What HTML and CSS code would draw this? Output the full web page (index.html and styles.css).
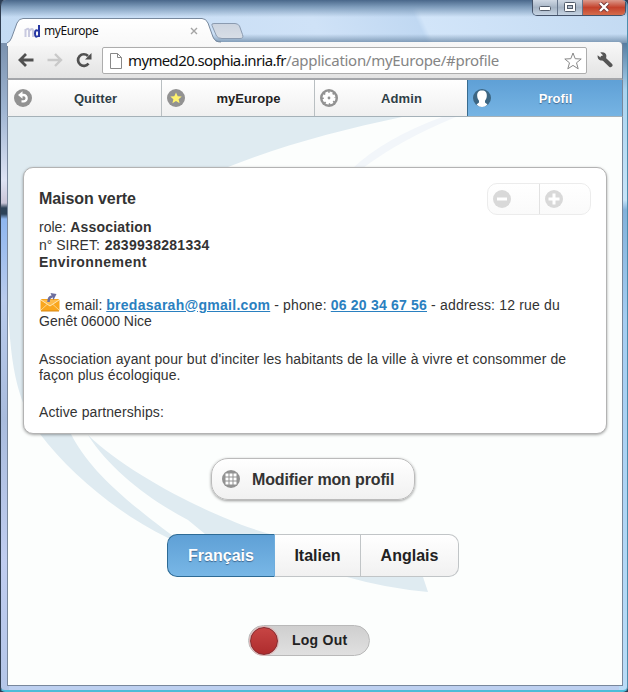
FILE: index.html
```html
<!DOCTYPE html>
<html lang="fr">
<head>
<meta charset="utf-8">
<title>myEurope</title>
<link rel="stylesheet" href="styles.css">
</head>
<body>
<div class="window">
  <header class="titlebar">
    <svg class="tabshape" width="260" height="28" viewBox="0 0 260 28">
      <defs>
        <linearGradient id="tabfill" x1="0" y1="0" x2="0" y2="1"><stop offset="0" stop-color="#fff"/><stop offset="1" stop-color="#f8f8f8"/></linearGradient>
        <linearGradient id="newfill" x1="0" y1="0" x2="0" y2="1"><stop offset="0" stop-color="#ccd4df"/><stop offset="1" stop-color="#d8dee6"/></linearGradient>
      </defs>
      <path d="M205 7.500Q204 5.500 207 5.500H228Q231 5.500 232.500 8L235.500 16.500Q237 20.500 233 20.500H215Q211 20.500 209.500 18Z" fill="url(#newfill)" stroke="#8b9bb0"/>
      <path d="M0 25Q3 24 4.500 20L10 5Q12 0.500 16 0.500H195Q199 0.500 201 5L206 19Q208 24.500 213 25V28H0Z" fill="url(#tabfill)"/>
      <path d="M0 25Q3 24 4.500 20L10 5Q12 0.500 16 0.500H195Q199 0.500 201 5L206 19Q208 24 214 24" fill="none" stroke="#77889d"/>
    </svg>
    <div class="tab">
      <svg class="favicon" width="17" height="16" viewBox="0 0 17 16" fill="none">
        <path d="M1.500 14V6M1.500 7Q5 4 5 8V14M5 8Q9 4 9 8V14" stroke="#c9cae0" stroke-width="2"/>
        <path d="M15 2V14M14 8Q11 6 11 10.500T14 13" stroke="#2536a2" stroke-width="2"/>
      </svg>
      <span class="tabtitle">myEurope</span>
      <svg class="tabclose" width="8" height="8" viewBox="0 0 8 8"><path d="M1 1L7 7M7 1L1 7" stroke="#a4a4a4" stroke-width="1.400"/></svg>
    </div>
    <div class="controls">
      <span class="ctl min"><svg width="13" height="6" viewBox="0 0 13 6"><rect x=".5" y=".5" width="11" height="4" rx="1" fill="#fff" stroke="#525c6b"/></svg></span>
      <span class="ctl max"><svg width="12" height="10" viewBox="0 0 12 10"><rect x=".5" y=".5" width="11" height="9" rx="1" fill="#fff" stroke="#525c6b"/><rect x="3.500" y="3.500" width="5" height="3" fill="#b5bfcd" stroke="#525c6b"/></svg></span>
      <span class="ctl close"><svg width="12" height="10" viewBox="0 0 12 10"><path d="M2 1L10 9M10 1L2 9" stroke="#6f3434" stroke-width="4"/><path d="M2 1L10 9M10 1L2 9" stroke="#fff" stroke-width="2.400"/></svg></span>
    </div>
  </header>

  <div class="toolbar">
    <svg class="back" width="16" height="14" viewBox="0 0 16 14" fill="none" stroke="#505050" stroke-width="2.800"><path d="M2 7H15.500M8 1L2 7L8 13"/></svg>
    <svg class="forward" width="16" height="14" viewBox="0 0 16 14" fill="none" stroke="#c9c9c9" stroke-width="2.400"><path d="M.5 7H14M8 1L14 7L8 13"/></svg>
    <svg class="reload" width="16" height="16" viewBox="0 0 16 16"><path d="M12.500 11.500A5.800 5.800 0 1 1 12 4" fill="none" stroke="#505050" stroke-width="2.700"/><path d="M15.500 1V7.500H9Z" fill="#505050"/></svg>
    <div class="address">
      <svg class="page" width="12" height="16" viewBox="0 0 12 16"><path d="M.5 .5H7.500L11.500 4.500V15.500H.5ZM7.500 .5V4.500H11.500" fill="#fff" stroke="#888"/></svg>
      <span class="url"><span class="host">mymed20.sophia.inria.fr</span><span class="path">/application/myEurope/#profile</span></span>
      <svg class="bookmark" width="18" height="18" viewBox="0 0 18 18"><path d="M9 1L11.200 6.700L17.200 7L12.500 10.800L14.200 16.800L9 13.400L3.800 16.800L5.500 10.800L.8 7L6.800 6.700Z" fill="#fff" stroke="#888" stroke-linejoin="round"/></svg>
    </div>
    <svg class="wrench" width="16" height="16" viewBox="0 0 16 16"><path d="M5.500 5.500L13.500 13.200" stroke="#555" stroke-width="4" stroke-linecap="round"/><path d="M3.200 .5L6 3.200L5.600 5L3.600 5.600L.6 3.200Q.3 7 3 8.300Q5 9 7 8L9.300 5.500Q9.800 1.500 6.800 .6Q5 0 3.200 .5Z" fill="#555"/></svg>
  </div>

  <nav class="nav">
    <a class="navitem">
      <svg class="icon" width="18" height="18" viewBox="0 0 18 18"><circle cx="9" cy="9" r="9" fill="#929292"/><path d="M8 6H9.500A3.100 3.100 0 0 1 9.500 12.400H7.500" fill="none" stroke="#fff" stroke-width="2.300"/><path d="M8.500 2.300V9.700L4 6Z" fill="#fff"/></svg>
      <span>Quitter</span></a>
    <a class="navitem dark">
      <svg class="icon" width="18" height="18" viewBox="0 0 18 18"><circle cx="9" cy="9" r="9" fill="#929292"/><path d="M9 3.500L10.700 7.200L14.700 7.500L11.600 10.200L12.600 14.200L9 12L5.400 14.200L6.400 10.200L3.300 7.500L7.300 7.200Z" fill="#fff36d"/></svg>
      <span>myEurope</span></a>
    <a class="navitem">
      <svg class="icon" width="18" height="18" viewBox="0 0 18 18"><circle cx="9" cy="9" r="9" fill="#929292"/><circle cx="9" cy="9" r="5.200" fill="#fff"/><circle cx="9" cy="9" r="5.300" fill="none" stroke="#fff" stroke-width="2.400" stroke-dasharray="2.800 1.362"/><circle cx="9" cy="9" r="1.400" fill="#929292"/></svg>
      <span>Admin</span></a>
    <a class="navitem active">
      <svg class="icon" width="18" height="18" viewBox="0 0 18 18"><circle cx="9" cy="9" r="9" fill="#3c6683"/><path d="M9 1.500C12.500 1.500 14 3.500 13.800 7C13.700 9.500 12.900 10.500 12 11.800V13.500L14.500 15.500Q12 18 9 18T3.500 15.500L6 13.500V11.800C5.100 10.500 4.300 9.500 4.200 7C4 3.500 5.500 1.500 9 1.500Z" fill="#fff"/></svg>
      <span>Profil</span></a>
  </nav>

  <main class="content">
    <svg class="swoosh" width="614" height="569" viewBox="8 117 614 569">
      <path d="M8 117H402C340 130 280 146 228 167C90 222 20 320 71 434C88 467 117 495 180 541L168 538C120 515 70 474 40 434C20 405 10 375 8 300Z" fill="#dfebf1"/>
      <path d="M88 435C120 466 180 500 230 520Q245 527 270 534Q340 560 423 577L428 592Q385 588 347 577L205 534L188 520C150 500 110 470 88 435Z" fill="#dfebf1"/>
      <path d="M442 117Q385 138 353 168L363 168Q400 140 456 117Z" fill="#f2f6fa"/>
    </svg>

    <section class="card">
      <div class="stepper">
        <span class="step"><svg width="18" height="18" viewBox="0 0 18 18"><circle cx="9" cy="9" r="9" fill="#d9d9d9"/><path d="M4 9H14" stroke="#fff" stroke-width="3"/></svg></span>
        <span class="step"><svg width="18" height="18" viewBox="0 0 18 18"><circle cx="9" cy="9" r="9" fill="#d9d9d9"/><path d="M3.500 9H14.500M9 3.500V14.500" stroke="#fff" stroke-width="3"/></svg></span>
      </div>
      <h3>Maison verte</h3>
      <div class="facts">
        <div>role: <b class="kind">Association</b></div>
        <div>n° SIRET: <b class="siret">2839938281334</b></div>
        <div><b class="theme">Environnement</b></div>
      </div>
      <p class="contact"><svg class="mail" width="22" height="20" viewBox="0 0 22 20"><rect x="1.500" y="7" width="19" height="12" rx="1.500" fill="#f9a61d"/><path d="M2 8L11 14L20 8" fill="#fdbb4a" stroke="#ffe7b5"/><path d="M2 18L8 12.500M20 18L14 12.500" stroke="#ffd587"/><path d="M2 19H20" stroke="#d98713"/><path d="M9.500 10Q9.500 5 13 4.500" fill="none" stroke="#6d6e9d" stroke-width="2.600"/><path d="M11.500 1L17.500 2L14.500 8Z" fill="#6d6e9d"/></svg>email: <a class="mailto">bredasarah@gmail.com</a><span class="phone"> - phone: </span><a class="tel">06 20 34 67 56</a><span class="street"> - address: 12 rue du</span><br>Genêt 06000 Nice</p>
      <p class="about">Association ayant pour but d'inciter les habitants de la ville à vivre et consommer de<br>façon plus écologique.</p>
      <p class="partners">Active partnerships:</p>
    </section>

    <a class="edit">
      <svg width="18" height="18" viewBox="0 0 18 18"><circle cx="9" cy="9" r="9" fill="#929292"/><path d="M4 4H7V7H4ZM8 4H11V7H8ZM12 4H15V7H12ZM4 8H7V11H4ZM8 8H11V11H8ZM12 8H15V11H12ZM4 12H7V15H4ZM8 12H11V15H8ZM12 12H15V15H12Z" transform="translate(-.5 -.5)" fill="#fff"/></svg>
      <span>Modifier mon profil</span>
    </a>

    <div class="langs">
      <a class="lang on"><span>Français</span></a>
      <a class="lang"><span>Italien</span></a>
      <a class="lang"><span>Anglais</span></a>
    </div>

    <div class="logout"><i class="knob"></i><span>Log Out</span></div>
  </main>
</div>
</body>
</html>
```
FILE: styles.css
```css
* { box-sizing: border-box; }
body { margin: 0; background: #2c3f57; }
.window {
  width: 628px; height: 692px; padding: 0 4px 4px 6px; overflow: hidden;
  border: 1px solid #4d8fae; border-width: 0 1px 2px 1px;
  border-bottom-color: #4cbcd8; border-left-color: #2f3d50;
  border-radius: 6px 6px 5px 5px;
  background:
    linear-gradient(#49678a, #7f9dbc 7px, rgba(190,215,240,0) 17px) 0 0 / 100% 20px no-repeat,
    linear-gradient(0deg, rgba(95,125,155,.75), rgba(95,125,155,0)) 205px 34px / 430px 9px no-repeat,
    linear-gradient(65deg, #c4dbf3 0%, #cfe2f7 50%, #c0d8f2 66%, #d2e5f9 67%, #c3daf2 100%) 0 0 / 100% 43px no-repeat,
    linear-gradient(#7990ad 40px, #9fb5d2 110px, #dde3f4 180px, #c9c5d8 203px, #2c4258 208px, #2c4258 214px, #8eb6ef 219px, #b9cbec 300px, #a9bcdd 420px, #c0cdf0 560px, #b4c6e8 692px) 0 0 / 8px 100% no-repeat,
    linear-gradient(#52779c 40px, #a9d3ef 90px, #c7e4f8 200px, #82b1da 210px, #a5cdf1 320px, #b9dcf7 692px) 100% 0 / 8px 100% no-repeat,
    #bdd0f0;
  font-family: "Liberation Sans", Arial, sans-serif; color: #333;
  display: flex; flex-direction: column;
}
.titlebar { height: 42px; flex: none; position: relative; display: flex; justify-content: space-between; }
.tabshape { position: absolute; left: 0; top: 18px; }
.tab { position: relative; display: flex; align-items: center; width: 174px; height: 26px; margin: 18px 0 0 17px; }
.favicon { flex: none; }
.tabtitle { font: 12px/16px "Noto Sans", sans-serif; color: #111; margin-left: 3px; letter-spacing: -.4px; flex: 1; }
.controls { display: flex; height: 16px; margin-right: -3px; border: 1px solid #44536a; border-top: 0; border-radius: 0 0 5px 5px; overflow: hidden; }
.ctl { display: flex; align-items: center; justify-content: center; width: 25px; padding-bottom: 1px; background: linear-gradient(#cfd8e4, #a5b3c4 50%, #c6d4e3); border-right: 1px solid #65748a; }
.min { padding-top: 4px; }
.close { width: 42px; border: 0; background: linear-gradient(#dc9a8c, #c4422c 50%, #d56c4c); }

.toolbar { height: 38px; flex: none; display: flex; align-items: center; border: 1px solid #75859a; border-bottom: 2px solid #a4a6aa; border-radius: 0 4px 0 0; border-top-width: 0; background: linear-gradient(#f8f8f8, #e3e3e3); padding: 0 8px 0 10px; }
.forward { margin-left: 13px; }
.reload { margin-left: 13px; }
.address { height: 27px; width: 485px; margin: 1px 0 0 10px; border: 1px solid #adadad; border-radius: 2px; background: #fff; display: flex; align-items: center; padding: 0 4px 0 7px; }
.page, .bookmark { flex: none; }
.url { font: 15px/24px "Noto Sans", sans-serif; color: #111; margin-left: 6px; white-space: nowrap; flex: 1; padding-bottom: 1px; }
.host { letter-spacing: -.64px; }
.path { color: #858585; letter-spacing: -.29px; }
.wrench { margin-left: 10px; }

.nav { height: 37px; flex: none; display: grid; grid-template-columns: 153px 153px 153px 1fr; border-left: 1px solid #78879c; border-right: 1px solid #78879c; border-bottom: 1px solid #a5b1b8; background: #f5f5f5; padding-left: 1px; }
.navitem { display: flex; align-items: center; padding: 0 2px 0 5px; font-size: 13px; letter-spacing: .08px; font-weight: bold; color: #2f3e46; border-right: 1px solid #b9bfc2; background: linear-gradient(#fff, #f0f0f0); text-shadow: 0 1px 0 #fff; }
.navitem span { flex: 1; text-align: center; }
.navitem .icon { flex: none; }
.navitem.dark { color: #222; }
.navitem.active { color: #fff; border: 0; border-left: 1px solid #396c8f; margin-left: -1px; background: linear-gradient(#5fa0d6, #76b4e3); text-shadow: 0 1px 1px #3e6790; }

.content { flex: 1; position: relative; border: 1px solid #78879c; border-top: 0; background: #fcfefd; display: flex; flex-direction: column; align-items: center; min-height: 0; }
.swoosh { position: absolute; left: 0; top: 0; }
.card { position: relative; flex: none; width: 584px; height: 267px; margin-top: 50px; padding: 22px 15px 0; background: #fff; border: 1px solid #b3b3b3; border-radius: 10px; box-shadow: 0 1px 3px rgba(0,0,0,.35); }
.card h3 { margin: 0; font-size: 16px; line-height: 18px; letter-spacing: -.08px; }
.facts { margin-top: 11px; font-size: 14px; line-height: 17.500px; }
.kind { letter-spacing: .22px; }
.siret { letter-spacing: .28px; margin-left: 1px; }
.theme { letter-spacing: .46px; }
.card p { margin: 0; font-size: 14px; line-height: 16px; white-space: nowrap; }
.card .contact { margin-top: 25px; }
.card .about { margin-top: 22px; letter-spacing: .1px; }
.card .partners { margin-top: 21px; letter-spacing: .1px; }
.mail { margin: -6px 4px -1px 0; vertical-align: -1px; height: 20px; }
.contact a { color: #2a80c0; font-weight: bold; text-decoration: underline; }
.mailto { letter-spacing: .28px; }
.phone { letter-spacing: .14px; }
.tel { letter-spacing: .2px; }
.street { letter-spacing: .18px; }
.stepper { position: absolute; right: 15px; top: 15px; width: 104px; height: 32px; display: flex; border: 1px solid #ececec; border-radius: 10px; background: linear-gradient(#fff, #fafafa); }
.step { width: 52px; display: flex; align-items: center; padding-left: 5px; }
.step + .step { border-left: 1px solid #e2e2e2; }

.edit { position: relative; flex: none; width: 204px; height: 42px; margin-top: 24px; display: flex; align-items: center; padding-left: 10px; font-size: 16px; font-weight: bold; border: 1px solid #bbb; border-radius: 17px; background: linear-gradient(#fff, #f1f1f1); box-shadow: 0 1px 3px rgba(0,0,0,.4); margin-right: 4px; }
.edit span { margin-left: 12px; white-space: nowrap; letter-spacing: -.14px; padding-top: 1px; }
.langs { position: relative; flex: none; display: grid; grid-template-columns: 108px 86px 98px; height: 43px; margin-top: 34px; margin-right: 4px; font-size: 16px; font-weight: bold; color: #222; }
.lang { display: flex; align-items: center; justify-content: center; border: 1px solid #c1c5c7; border-left-width: 0; background: linear-gradient(#fff, #f1f1f1); }
.lang.on { color: #fff; border: 1px solid #2e6b95; border-right-color: #6eaddd; border-radius: 10px 0 0 10px; background: linear-gradient(#5fa0d6, #78b7e6); text-shadow: 0 1px 1px #3e6790; }
.lang:last-child { border-radius: 0 10px 10px 0; }
.logout { position: relative; flex: none; width: 122px; height: 31px; margin-top: 48px; margin-right: 12px; display: flex; align-items: center; padding-left: 1px; border: 1px solid #b9b9b9; border-radius: 16px; background: linear-gradient(#cfcfcf, #e0e0e0); font-size: 14px; font-weight: bold; color: #222; }
.knob { width: 28px; height: 28px; border-radius: 50%; border: 1px solid #862a2e; background: linear-gradient(#c74544, #ae2c2d); box-shadow: 0 0 0 1px #dfb5b5; }
.logout span { margin-left: 14px; margin-top: -1px; letter-spacing: .25px; }
```
